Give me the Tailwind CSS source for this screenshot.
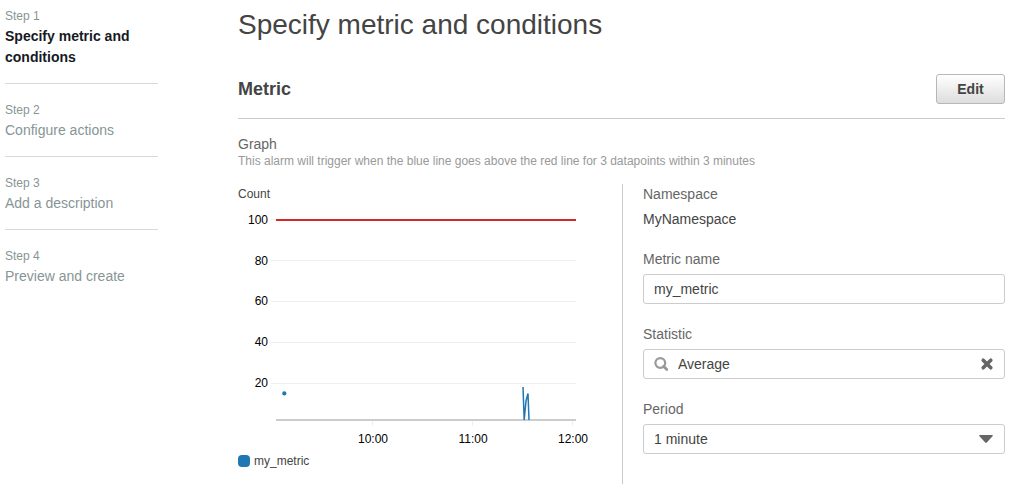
<!DOCTYPE html>
<html lang="en">
<head>
    <meta charset="UTF-8">
    <meta name="viewport" content="width=device-width, initial-scale=1.0">
    <title>Specify metric and conditions</title>
    <script src="https://cdn.jsdelivr.net/npm/@tailwindcss/browser@4"></script>
</head>
<body class="bg-white font-['Liberation_Sans',Arial,sans-serif] text-sm leading-5 text-[#444]">
    <div class="flex gap-20 pl-[5px] pr-3 pt-1.5">
        <!-- Wizard steps -->
        <nav class="w-[153px] shrink-0 text-[#879596]">
            <ol class="divide-y divide-[#d5dbdb]">
                <li class="pb-[15px]" aria-current="step">
                    <p class="text-xs leading-5">Step 1</p>
                    <p class="leading-[21px] font-bold text-[#16191f]">Specify metric and conditions</p>
                </li>
                <li class="pt-4 pb-[15px]">
                    <p class="text-xs leading-5">Step 2</p>
                    <p class="leading-[21px]">Configure actions</p>
                </li>
                <li class="pt-4 pb-[15px]">
                    <p class="text-xs leading-5">Step 3</p>
                    <p class="leading-[21px]">Add a description</p>
                </li>
                <li class="pt-4 pb-[15px]">
                    <p class="text-xs leading-5">Step 4</p>
                    <p class="leading-[21px]">Preview and create</p>
                </li>
            </ol>
        </nav>

        <main class="min-w-0 flex-1">
            <h1 class="text-[28px] leading-[38px]">Specify metric and conditions</h1>

            <div class="mt-[30px] flex items-center justify-between border-b border-[#ccc] pb-3.5">
                <h2 class="text-lg leading-[30px] font-bold">Metric</h2>
                <button type="button" class="h-[30px] w-[69px] rounded-[3px] border border-[#b7b7b7] bg-linear-to-b from-white to-[#dddddd] font-bold">Edit</button>
            </div>

            <h3 class="mt-[15px] text-[#666]">Graph</h3>
            <p class="text-xs leading-[14px] text-[#999]">This alarm will trigger when the blue line goes above the red line for 3 datapoints within 3 minutes</p>

            <div class="mt-4 grid grid-cols-[384px_1fr]">
                <!-- Graph -->
                <div>
                    <p class="text-xs leading-5">Count</p>
                    <svg class="block" width="352" height="244" viewBox="0 0 352 244" role="img" aria-label="my_metric graph">
                        <g fill="#eee">
                            <rect x="33" y="15" width="305" height="1"/>
                            <rect x="33" y="56" width="305" height="1"/>
                            <rect x="33" y="97" width="305" height="1"/>
                            <rect x="33" y="138" width="305" height="1"/>
                            <rect x="33" y="179" width="305" height="1"/>
                            <rect x="134" y="217" width="1" height="5"/>
                            <rect x="234" y="217" width="1" height="5"/>
                            <rect x="334" y="217" width="1" height="5"/>
                        </g>
                        <rect x="38" y="215" width="300" height="2" fill="#ccc"/>
                        <rect x="38" y="15" width="300" height="2" fill="#d62728"/>
                        <circle cx="46.3" cy="189.4" r="2.1" fill="#1f77b4"/>
                        <path d="M285 183L286.2 216L288 197L290 189.500L291 216" fill="none" stroke="#1f77b4" stroke-width="1.5" stroke-linejoin="bevel"/>
                        <g class="text-xs" fill="#000" text-anchor="end">
                            <text x="30" y="20">100</text>
                            <text x="30" y="61">80</text>
                            <text x="30" y="101">60</text>
                            <text x="30" y="142">40</text>
                            <text x="30" y="183">20</text>
                        </g>
                        <g class="text-xs" fill="#000" text-anchor="middle">
                            <text x="135" y="239">10:00</text>
                            <text x="235" y="239">11:00</text>
                            <text x="335" y="239">12:00</text>
                        </g>
                    </svg>
                    <div class="mt-[3px] flex items-center gap-1 text-xs leading-5">
                        <span class="size-3 rounded-sm bg-[#1f77b4]"></span>
                        <span>my_metric</span>
                    </div>
                </div>

                <!-- Metric settings -->
                <form class="flex flex-col gap-5 border-l border-[#ccc] pl-5 pb-[30px]">
                    <dl>
                        <dt class="text-[#666]">Namespace</dt>
                        <dd class="mt-[5px]">MyNamespace</dd>
                    </dl>
                    <div>
                        <label for="metricName" class="block text-[#666]">Metric name</label>
                        <input type="text" id="metricName" value="my_metric" class="mt-[5px] block h-[30px] w-full rounded-[3px] border border-[#ccc] px-2.5">
                    </div>
                    <div>
                        <label for="statistic" class="block text-[#666]">Statistic</label>
                        <div class="mt-[5px] flex h-[30px] items-center rounded-[3px] border border-[#ccc] px-2.5">
                            <svg class="shrink-0" width="14" height="14" viewBox="0 0 14 14" fill="none" stroke="#999" stroke-width="2.2">
                                <circle cx="6.3" cy="6" r="4.9"/>
                                <path d="M9.6 9.3L12.800 12.500" stroke-width="2.800" stroke-linecap="round"/>
                            </svg>
                            <input type="text" id="statistic" value="Average" class="ml-2.5 min-w-0 flex-1">
                            <button type="button" aria-label="Clear" class="shrink-0">
                                <svg class="block" width="14" height="14" viewBox="0 0 14 14" stroke="#666" stroke-width="3.6" stroke-linecap="round">
                                    <path d="M3.2 3.2L10.8 10.8M10.8 3.2L3.2 10.8"/>
                                </svg>
                            </button>
                        </div>
                    </div>
                    <div>
                        <label for="period" class="block text-[#666]">Period</label>
                        <div class="relative mt-[5px]">
                            <select id="period" class="block h-[30px] w-full appearance-none rounded-[3px] border border-[#ccc] px-2.5">
                                <option>1 minute</option>
                            </select>
                            <svg class="pointer-events-none absolute top-[11px] right-3" width="14" height="8" viewBox="0 0 14 8" fill="#666">
                                <path d="M.6 0H13.4Q14.2 .5 13.5 1.2L7.8 7.4Q7 8.1 6.2 7.4L.5 1.2Q-.2 .5 .6 0Z"/>
                            </svg>
                        </div>
                    </div>
                </form>
            </div>
        </main>
    </div>
</body>
</html>
